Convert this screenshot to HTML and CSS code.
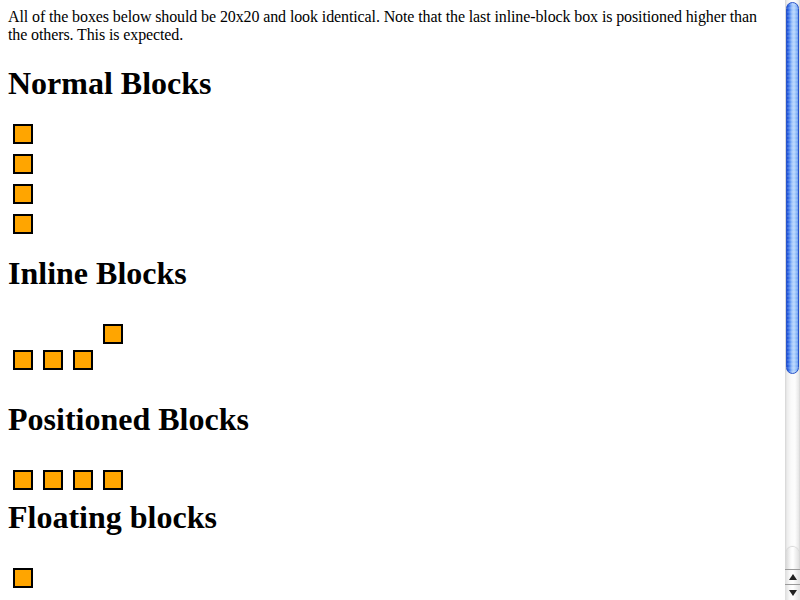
FILE: index.html
```html
<!DOCTYPE html>
<html>
<head>
<meta charset="utf-8">
<link rel="stylesheet" href="styles.css">
</head>
<body>
<div class="page">
  <div class="content">
    <div class="intro">All of the boxes below should be 20x20 and look identical. Note that the last inline-block box is positioned higher than the others. This is expected.</div>
    <h1 class="heading">Normal Blocks</h1>
    <div class="normal">
      <div class="box"></div>
      <div class="box"></div>
      <div class="box"></div>
      <div class="box"></div>
    </div>
    <h1 class="heading">Inline Blocks</h1>
    <div class="inline">
      <div class="box low"></div>
      <div class="box low"></div>
      <div class="box low"></div>
      <div class="box"></div>
    </div>
    <h1 class="heading">Positioned Blocks</h1>
    <div class="positioned">
      <div class="box"></div>
      <div class="box"></div>
      <div class="box"></div>
      <div class="box"></div>
    </div>
    <h1 class="heading tight">Floating blocks</h1>
    <div class="floating">
      <div class="box"></div>
    </div>
  </div>
  <div class="scrollbar">
    <div class="track">
      <div class="thumb"></div>
      <div class="track-end"></div>
    </div>
    <div class="btn up"><span class="arrow-up"></span></div>
    <div class="btn down"><span class="arrow-down"></span></div>
  </div>
</div>
</body>
</html>
```
FILE: styles.css
```css
html, body {
  margin: 0;
  padding: 0;
  background: #fff;
}
.page {
  width: 800px;
  height: 600px;
  overflow: hidden;
  display: flex;
}
.content {
  flex: 1;
  padding: 8px;
  font-family: "Liberation Serif", "Times New Roman", serif;
  font-size: 16px;
  color: #000;
}
.intro {
  line-height: 18px;
  letter-spacing: -0.11px;
}
.heading {
  font-size: 32px;
  font-weight: bold;
  line-height: 37px;
  margin: 21px 0 0;
}
.heading.tight {
  margin-top: 9px;
}
.box {
  width: 16px;
  height: 16px;
  border: 2px solid #000;
  background: #ffa500;
  flex: none;
}
.normal {
  display: flex;
  flex-direction: column;
  gap: 10px;
  padding: 22px 5px 0;
}
.inline {
  display: flex;
  align-items: flex-start;
  gap: 10px;
  padding: 32px 5px 10px;
}
.inline .low {
  margin-top: 26px;
}
.positioned {
  display: flex;
  gap: 10px;
  padding: 32px 5px 0;
}
.floating {
  display: flex;
  padding: 32px 5px 0;
}
.scrollbar {
  width: 15px;
  height: 600px;
  display: flex;
  flex-direction: column;
  background: linear-gradient(to right, #d4d4d4 0, #ececec 2px, #fafafa 6px, #fdfdfd 10px, #e6e6e6 14px, #cfcfcf 15px);
}
.track {
  flex: 1;
  position: relative;
}
.thumb {
  position: absolute;
  left: 1px;
  top: 2px;
  width: 13px;
  height: 372px;
  border-radius: 7px;
  box-sizing: border-box;
  border: 1px solid #2a55c8;
  background:
    repeating-linear-gradient(to bottom, rgba(255,255,255,0.12) 0 2px, rgba(0,0,0,0) 2px 4px),
    linear-gradient(to right, #1b4bd4 0, #3d78ec 2px, #9ec4fa 5px, #b8d6fd 7px, #7eaff6 10px, #2c63e0 13px);
}
.track-end {
  position: absolute;
  left: 1px;
  bottom: 0;
  width: 13px;
  height: 22px;
  border-radius: 7px 7px 0 0;
  background: linear-gradient(to right, #d8d8d8, #fbfbfb 5px, #ffffff 7px, #e0e0e0 13px);
  box-shadow: 0 -1px 1px rgba(0,0,0,0.15);
}
.btn {
  height: 15px;
  box-sizing: border-box;
  border-top: 1px solid #9a9a9a;
  background: linear-gradient(to right, #dcdcdc, #fafafa 5px, #ffffff 8px, #e4e4e4 14px);
  display: flex;
  align-items: center;
  justify-content: center;
}
.btn.down {
  height: 16px;
}
.arrow-up {
  width: 0;
  height: 0;
  border-left: 4px solid transparent;
  border-right: 4px solid transparent;
  border-bottom: 6px solid #222;
}
.arrow-down {
  width: 0;
  height: 0;
  border-left: 4px solid transparent;
  border-right: 4px solid transparent;
  border-top: 6px solid #222;
}
```
